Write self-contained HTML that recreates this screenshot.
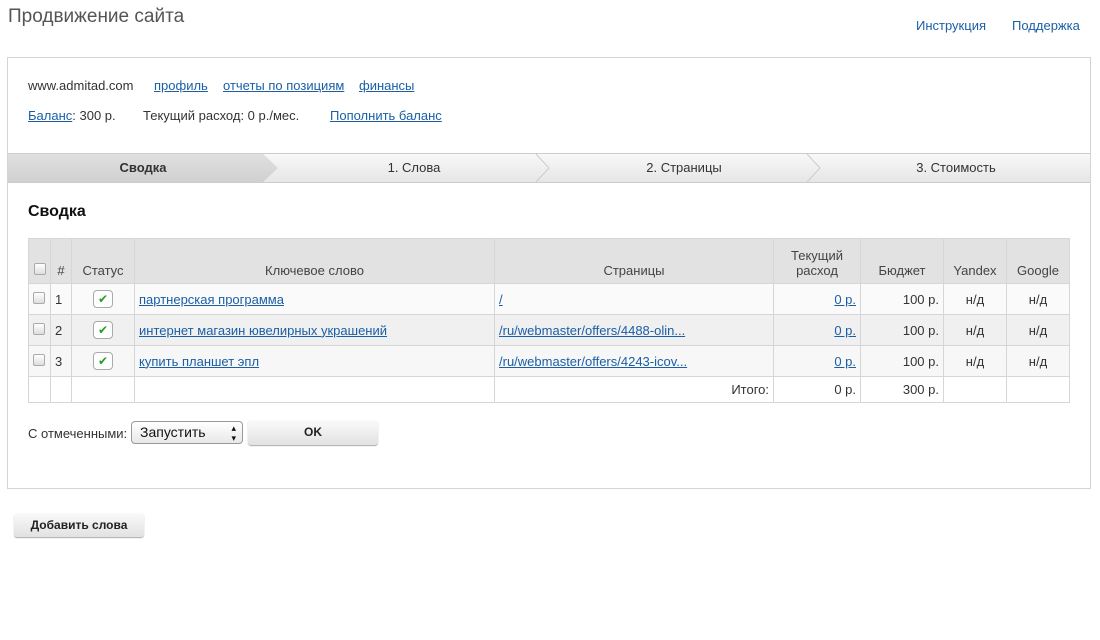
<!DOCTYPE html>
<html><head><meta charset="utf-8"><style>
*{box-sizing:border-box}
body{margin:0;width:1100px;height:640px;background:#fff;font-family:"Liberation Sans",Arial,sans-serif;font-size:13px;color:#333;position:relative}
a{color:#1a5fa6;text-decoration:underline}
.abs{position:absolute}
h1{position:absolute;left:8px;top:6px;margin:0;font-size:19px;font-weight:normal;color:#555}
.box{position:absolute;left:7px;top:57px;width:1084px;height:432px;border:1px solid #d4d4d4}
.tabs{position:absolute;left:0;top:95px;width:1082px;height:30px;background:linear-gradient(#f8f8f8,#e6e6e6);border-top:1px solid #ccc;border-bottom:1px solid #ccc}
.tab{position:absolute;top:0;height:28px;line-height:28px;text-align:center;font-size:13px;color:#333}
table{position:absolute;left:20px;top:180px;border-collapse:collapse;width:1042px}
td,th{border:1px solid #d6d6d6;font-size:13px;padding:0 4px;height:31px;line-height:15px}
th{background:#e2e2e2;font-weight:normal;color:#444;height:45px;vertical-align:bottom;padding-bottom:5px}
.r1 td{background:#fafafa}.r2 td{background:#f0f0f0}.r3 td{background:#f7f7f7}
.tot td{height:26px;padding-top:0;padding-bottom:0}
.cb{display:inline-block;width:12px;height:12px;border:1px solid #aaa;border-radius:2px;background:linear-gradient(#fff,#ddd)}
.ck{display:inline-block;width:20px;height:18px;border:1px solid #aaa;border-radius:4px;background:#fff;color:#2a9a2a;font-size:12px;line-height:16px;text-align:center}
.btn{position:absolute;background:linear-gradient(#fafafa,#e2e2e2);border-radius:3px;box-shadow:0 1px 1px #aaa;font-weight:bold;font-size:12px;text-align:center;color:#222}
</style></head><body>
<h1>Продвижение сайта</h1>
<a class="abs" style="left:916px;top:18px;text-decoration:none">Инструкция</a>
<a class="abs" style="left:1012px;top:18px;text-decoration:none">Поддержка</a>
<div class="box">
 <div class="abs" style="left:20px;top:20px">www.admitad.com</div>
 <a class="abs" style="left:146px;top:20px">профиль</a>
 <a class="abs" style="left:215px;top:20px">отчеты по позициям</a>
 <a class="abs" style="left:351px;top:20px">финансы</a>
 <div class="abs" style="left:20px;top:50px"><a>Баланс</a>: 300 р.</div>
 <div class="abs" style="left:135px;top:50px">Текущий расход: 0 р./мес.</div>
 <a class="abs" style="left:322px;top:50px">Пополнить баланс</a>
 <div class="tabs">
  <div class="tab" style="left:0;width:270px;background:linear-gradient(#e0e0e0,#d0d0d0);font-weight:bold;clip-path:polygon(0 0,255px 0,270px 50%,255px 100%,0 100%)">Сводка</div>
  <svg class="abs" style="left:525px;top:0" width="20" height="28"><path d="M3 0 L16 14 L3 28" fill="none" stroke="#ccc"/></svg>
  <svg class="abs" style="left:796px;top:0" width="20" height="28"><path d="M3 0 L16 14 L3 28" fill="none" stroke="#ccc"/></svg>
  <div class="tab" style="left:336px;width:140px">1. Слова</div>
  <div class="tab" style="left:606px;width:140px">2. Страницы</div>
  <div class="tab" style="left:868px;width:160px">3. Стоимость</div>
 </div>
 <div class="abs" style="left:20px;top:145px;font-size:16px;font-weight:bold;color:#111">Сводка</div>
 <table>
  <tr><th style="width:22px"><span class="cb"></span></th><th style="width:21px">#</th><th style="width:63px">Статус</th><th style="width:360px">Ключевое слово</th><th style="width:279px">Страницы</th><th style="width:87px">Текущий<br>расход</th><th style="width:83px">Бюджет</th><th style="width:63px">Yandex</th><th>Google</th></tr>
  <tr class="r1"><td><span class="cb"></span></td><td>1</td><td style="text-align:center"><span class="ck">✔</span></td><td><a>партнерская программа</a></td><td><a>/</a></td><td style="text-align:right"><a>0 р.</a></td><td style="text-align:right">100 р.</td><td style="text-align:center">н/д</td><td style="text-align:center">н/д</td></tr>
  <tr class="r2"><td><span class="cb"></span></td><td>2</td><td style="text-align:center"><span class="ck">✔</span></td><td><a>интернет магазин ювелирных украшений</a></td><td><a>/ru/webmaster/offers/4488-olin...</a></td><td style="text-align:right"><a>0 р.</a></td><td style="text-align:right">100 р.</td><td style="text-align:center">н/д</td><td style="text-align:center">н/д</td></tr>
  <tr class="r3"><td><span class="cb"></span></td><td>3</td><td style="text-align:center"><span class="ck">✔</span></td><td><a>купить планшет эпл</a></td><td><a>/ru/webmaster/offers/4243-icov...</a></td><td style="text-align:right"><a>0 р.</a></td><td style="text-align:right">100 р.</td><td style="text-align:center">н/д</td><td style="text-align:center">н/д</td></tr>
  <tr class="tot"><td></td><td></td><td></td><td></td><td style="text-align:right">Итого:</td><td style="text-align:right">0 р.</td><td style="text-align:right">300 р.</td><td></td><td></td></tr>
 </table>
 <div class="abs" style="left:20px;top:368px">С отмеченными:</div>
 <div class="abs" style="left:123px;top:363px;width:112px;height:23px;border:1px solid #999;border-radius:4px;background:linear-gradient(#fff,#e8e8e8);font-size:14px;line-height:21px;padding-left:8px;color:#111">Запустить<span style="position:absolute;right:6px;top:0;font-size:9px;line-height:10px;padding-top:1px">▴<br>▾</span></div>
 <div class="btn" style="left:240px;top:362px;width:130px;height:25px;line-height:25px">OK</div>
</div>
<div class="btn" style="left:14px;top:513px;width:130px;height:24px;line-height:24px">Добавить слова</div>
</body></html>
